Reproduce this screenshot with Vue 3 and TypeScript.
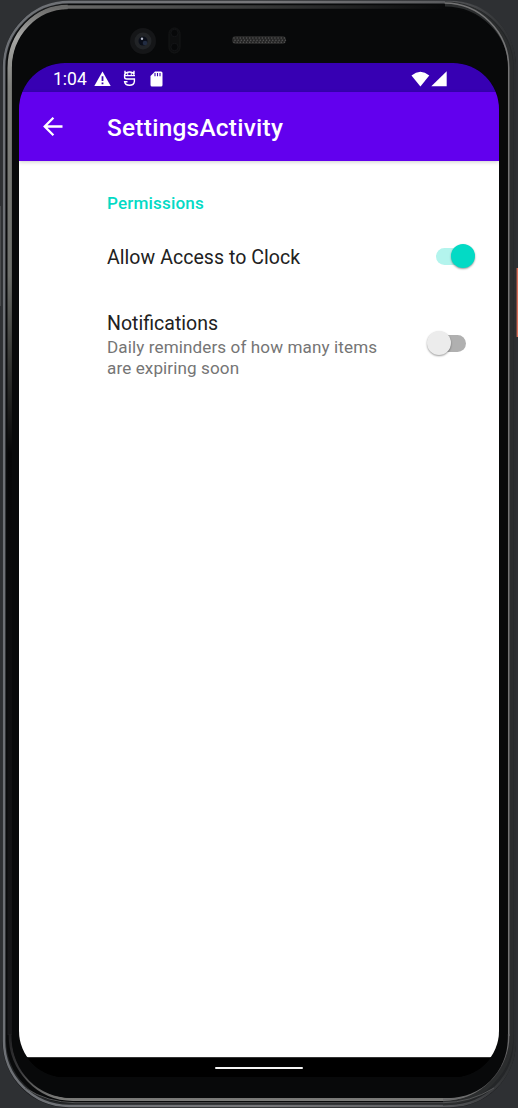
<script setup lang="ts">
import { ref } from 'vue'

interface Preference {
  id: string
  title: string
  summary?: string
  on: boolean
}

const preferences = ref<Preference[]>([
  { id: 'clock', title: 'Allow Access to Clock', on: true },
  { id: 'notify', title: 'Notifications', summary: 'Daily reminders of how many items are expiring soon', on: false },
])

const speakerDots = Array.from({ length: 17 }, (_, i) => 234 + i * 3.15)
</script>

<template>
  <div class="device">
    <svg class="frame" width="518" height="1108" viewBox="0 0 518 1108" aria-hidden="true">
      <defs>
        <linearGradient id="rim" x1="0" y1="0" x2="1" y2="0">
          <stop offset="0" stop-color="#6d7075" />
          <stop offset=".5" stop-color="#77777a" />
          <stop offset=".85" stop-color="#5c5d60" />
          <stop offset="1" stop-color="#2b2d2f" />
        </linearGradient>
        <linearGradient id="bevel" gradientUnits="userSpaceOnUse" x1="0" y1="7" x2="0" y2="1000">
          <stop offset="0" stop-color="#6a6a69" />
          <stop offset=".03" stop-color="#a6a6a4" />
          <stop offset=".08" stop-color="#80817d" />
          <stop offset=".27" stop-color="#6c6e6a" />
          <stop offset=".36" stop-color="#343532" />
          <stop offset=".45" stop-color="#060607" />
          <stop offset="1" stop-color="#18181a" />
        </linearGradient>
        <linearGradient id="topBevel" gradientUnits="userSpaceOnUse" x1="66" y1="0" x2="445" y2="0">
          <stop offset="0" stop-color="#6a6a69" />
          <stop offset=".3" stop-color="#4b4c4c" />
          <stop offset="1" stop-color="#090a0b" />
        </linearGradient>
        <linearGradient id="lowerEdge" gradientUnits="userSpaceOnUse" x1="0" y1="1025" x2="0" y2="1100">
          <stop offset="0" stop-color="#18181a" />
          <stop offset=".6" stop-color="#39393b" />
          <stop offset="1" stop-color="#7c7c7a" />
        </linearGradient>
      </defs>
      <rect width="518" height="1108" fill="#2e3033" />
      <rect x="0" y="206" width="1" height="100" fill="#484a4c" />
      <rect x="516.5" y="268" width="1.5" height="69" fill="#d56c57" />
      <rect x="2.5" y="1" width="513.5" height="1106.5" rx="66" fill="#151618" />
      <rect x="4" y="2" width="511" height="1104" rx="65" fill="#242628" stroke="url(#rim)" stroke-width="2.4" />
      <rect x="6" y="4" width="505" height="1099" rx="63" fill="#090a0b" />
      <path d="M9.7 1035V68A58 61 0 0 1 67.7 7" fill="none" stroke="url(#bevel)" stroke-width="4.4" />
      <path d="M66 7L445 7.1" fill="none" stroke="url(#topBevel)" stroke-width="3.5" />
      <path d="M511 260V70A66 66 0 0 0 445 4M511 260V1035A68 68 0 0 1 443 1103" fill="none" stroke="#2b2d2e" stroke-width="5" />
      <path d="M10 1034A63 65 0 0 0 73 1099.5H443A65.7 65.5 0 0 0 508.7 1034" fill="none" stroke="url(#lowerEdge)" stroke-width="2.8" />
      <path d="M508.7 1036V68A64 65 0 0 0 444.7 3" fill="none" stroke="#747475" stroke-width="1.6" />
      <path d="M508.7 1034A65.7 65.5 0 0 1 443 1099.5" fill="none" stroke="#6b6b6c" stroke-width="1.8" />
      <path d="M25 1088Q48 1102.7 75 1102.7H443Q470 1102.7 494 1088" fill="none" stroke="#555657" stroke-width="1" />
      <rect x="12" y="9.5" width="495.7" height="1088.5" rx="59" fill="#08090a" />
      <rect x="19" y="63" width="480" height="1014" rx="46" fill="#000" />

      <circle cx="143" cy="41" r="13" fill="#151618" />
      <circle cx="143" cy="41" r="8.5" fill="#222427" />
      <circle cx="143" cy="41" r="4.5" fill="#0a0e19" />
      <circle cx="145" cy="43" r="2.3" fill="#222c42" />
      <circle cx="142" cy="38.7" r="1.2" fill="#b5b9c8" />
      <rect x="169" y="28" width="11" height="25" rx="5.5" fill="#0d0e0f" stroke="#151617" />
      <circle cx="174.5" cy="33" r="3.7" fill="#070809" stroke="#141517" />
      <circle cx="174.5" cy="47" r="3.7" fill="#070809" stroke="#141517" />
      <rect x="232" y="36" width="54" height="8" rx="4" fill="#252525" />
      <g fill="#555">
        <template v-for="x in speakerDots" :key="x">
          <circle :cx="x" cy="38" r=".8" />
          <circle :cx="x + 1" cy="40.2" r=".8" />
          <circle :cx="x" cy="42.3" r=".8" />
        </template>
      </g>
    </svg>

    <main class="screen">
      <header class="status">
        <span class="time">1:04</span>
        <svg class="warn" width="17" height="16" viewBox="0 0 17 16"><path d="M8.5 .5 16.7 15H.3Z" fill="#fff" /><path d="M8.5 5.3V10M8.5 11.4v1.9" stroke="#3700b3" stroke-width="1.8" /></svg>
        <svg class="bug" width="13" height="17" viewBox="0 0 13 17" fill="none" stroke="#fff" stroke-width="1.4">
          <path d="M2 .8V4M11 .8V4M12 5.6H1.6V4.6Q3 2 6.5 2T11.3 4.6M1.6 5.2V7.2Q1.6 9 3.8 9H11.4V11.4Q11 15.3 6.5 15.3T1.6 11.7H4.5" />
          <path d="M4 4h1.3M7.7 4H9" />
        </svg>
        <svg class="card" width="13" height="16" viewBox="0 0 13 16"><path d="M5 .5H11Q12.5 .5 12.5 2V14Q12.5 15.5 11 15.5H2Q.5 15.5 .5 14V5Z" fill="#fff" /><path d="M5 2v3.3M7.5 2v3.3M10 2v3.3" stroke="#3700b3" stroke-width="1.1" /></svg>
        <svg class="signal" width="36" height="16" viewBox="0 0 36 16" fill="#fff"><path d="M.5 4.4Q9.4-3 18.3 4.4L9.4 15.5Z" /><path d="M35.7 .2V15.2H20.3Z" /></svg>
      </header>

      <nav class="toolbar">
        <button class="back" aria-label="Navigate up">
          <svg width="20" height="20" viewBox="0 0 20 20" fill="none" stroke="#fff" stroke-width="2.3"><path d="M19.5 9.5H2M10.4 .8 1.7 9.5l8.7 8.7" /></svg>
        </button>
        <h1>SettingsActivity</h1>
      </nav>

      <section class="content">
        <h2>Permissions</h2>
        <div v-for="item in preferences" :key="item.id" class="preference" :class="item.id">
          <div class="copy">
            <div class="title">{{ item.title }}</div>
            <div v-if="item.summary" class="summary">{{ item.summary }}</div>
          </div>
          <button class="switch" :class="{ on: item.on }" role="switch" :aria-checked="item.on" :aria-label="item.title" @click="item.on = !item.on">
            <span class="thumb"></span>
          </button>
        </div>
      </section>
      <footer><span class="handle"></span></footer>
    </main>
  </div>
</template>

<style>
html, body { margin: 0; background: #2e3033; overflow: hidden; }
</style>

<style scoped>
.device { position: relative; width: 518px; height: 1108px; box-sizing: border-box; padding: 63px 19px 31px; font-family: Roboto, sans-serif; }
.frame { position: absolute; inset: 0; display: block; }
.screen { position: relative; height: 1014px; border-radius: 46px; overflow: hidden; display: flex; flex-direction: column; background: #000; }
button { appearance: none; border: 0; padding: 0; background: none; }
.status { height: 29px; flex: none; display: flex; align-items: center; padding: 2px 52px 0 34px; box-sizing: border-box; background: #3700b3; color: #fff; }
.time { font-size: 17.5px; line-height: 20px; width: 41px; }
.bug { margin-left: 12px; }
.card { margin-left: 14px; }
.signal { margin-left: auto; }
.toolbar { height: 69px; flex: none; display: flex; align-items: center; box-sizing: border-box; padding-left: 24px; background: #6200ee; color: #fff; position: relative; z-index: 1; box-shadow: 0 1px 4px #0003; }
.back { width: 20px; height: 20px; margin-right: 44px; }
.back svg { display: block; }
h1 { margin: 3px 0 0; font-size: 24.4px; font-weight: 500; line-height: 32px; letter-spacing: .27px; }
.content { flex: none; height: 896px; box-sizing: border-box; background: #fff; padding: 31px 24px 0 88px; }
h2 { margin: 0; color: #03dac5; font-size: 17.1px; line-height: 22px; font-weight: 500; letter-spacing: .16px; }
.preference { display: flex; align-items: center; justify-content: space-between; }
.clock { height: 64px; margin-top: 10px; }
.clock .title { padding-top: 3px; }
.notify { height: 108px; margin-top: 2px; }
.copy { width: 285px; }
.title { font-size: 19.55px; line-height: 25px; color: #212121; letter-spacing: .04px; }
.notify .title { letter-spacing: 0; }
.summary { position: relative; top: 1px; font-size: 17.1px; line-height: 20.5px; color: #757575; letter-spacing: .1px; }
.switch { display: flex; align-items: center; width: 30px; height: 17px; border-radius: 9px; background: #b0b0b0; margin-right: 9px; }
.notify .switch { margin-top: -2px; }
.switch .thumb { flex: none; width: 24px; height: 24px; margin-left: -9px; border-radius: 50%; background: #ececec; box-shadow: 0 1px 2px #0006; }
.switch.on { background: #b3f4ed; }
.switch.on .thumb { margin-left: 15px; background: #03dac5; }
footer { flex: 1; display: flex; justify-content: center; border-top: 1px solid #333; background: #000; }
.handle { width: 88px; height: 2px; margin-top: 9px; border-radius: 1px; background: #f5f5f5; }
</style>
